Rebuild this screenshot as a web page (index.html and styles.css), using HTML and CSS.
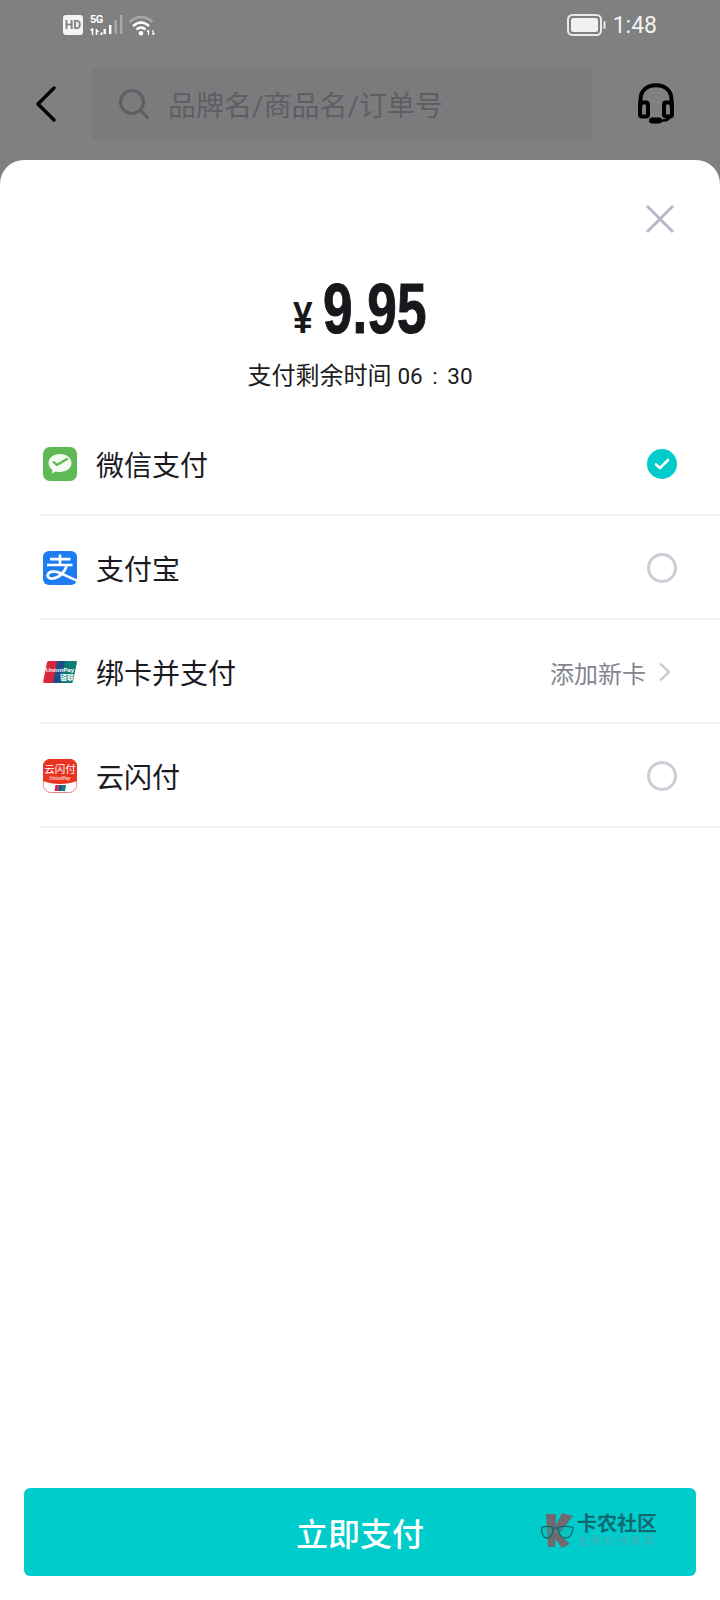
FILE: index.html
```html
<!DOCTYPE html>
<html lang="zh-CN">
<head>
<meta charset="utf-8">
<title>支付</title>
<link rel="stylesheet" href="styles.css">
</head>
<body>
<div class="screen">
  <div class="status">
    <div class="status-left">
      <span class="hd">HD</span>
      <div class="net">
        <span class="net-label">5G</span>
        <svg class="net-arrows" width="13" height="7" viewBox="0 0 13 7"><path d="M2.500 0v7M0.500 2.500L2.500 0.500M6.500 1v6M6.500 2l2 2" stroke="#fff" stroke-width="1.500" fill="none"/><path d="M10.500 4.500h2V7h-2z" fill="#fff"/></svg>
      </div>
      <svg class="signal" width="22" height="22" viewBox="0 0 22 22"><path d="M1.500 15h2.400v5H1.500zM7 11h2.400v9H7z" fill="#fff"/><path d="M12.500 6h2.400v14h-2.400zM18 1h2.400v19H18z" fill="#a9a9a9"/></svg>
      <svg class="wifi" width="28" height="22" viewBox="0 0 28 22"><path d="M1.500 8Q13-2 24.500 8" stroke="#a9a9a9" stroke-width="2.500" fill="none"/><path d="M5 12Q13 5 21 12M8.500 15.500Q13 11.500 17.500 15.500" stroke="#fff" stroke-width="2.400" fill="none"/><circle cx="13" cy="19.300" r="2.300" fill="#fff"/><path d="M20.500 16v5M19 18l1.500-2M25 16v5M25 21l1.500-2" stroke="#fff" stroke-width="1.200" fill="none"/></svg>
    </div>
    <div class="status-right">
      <svg class="battery" width="40" height="22" viewBox="0 0 40 22"><rect x="1" y="1" width="33" height="20" rx="4.500" fill="none" stroke="#eaeaea" stroke-width="2"/><rect x="4" y="4" width="27" height="14" rx="2.500" fill="#f1f1f1"/><rect x="36.500" y="7" width="2" height="8" rx="1" fill="#eaeaea"/></svg>
      <span class="clock">1:48</span>
    </div>
  </div>

  <div class="topbar">
    <svg class="back" width="22" height="36" viewBox="0 0 22 36"><path d="M19 2L3 18l16 16" stroke="#000" stroke-width="3.400" fill="none" stroke-linecap="round" stroke-linejoin="round"/></svg>
    <div class="search">
      <svg class="search-icon" width="32" height="32" viewBox="0 0 32 32"><circle cx="14" cy="14" r="11.500" stroke="#5f5f64" stroke-width="3" fill="none"/><path d="M22.500 22.500L29.500 29.500" stroke="#5f5f64" stroke-width="3" stroke-linecap="round"/></svg>
      <span class="search-text">品牌名/商品名/订单号</span>
    </div>
    <svg class="headset" width="38" height="42" viewBox="0 0 38 42"><path d="M3.500 24V17C3.500 7.500 10 2.200 19 2.200S34.500 7.500 34.500 17v7" stroke="#000" stroke-width="4" fill="none"/><rect x="3" y="19.500" width="8" height="14" rx="2" stroke="#000" stroke-width="4" fill="none"/><rect x="27" y="19.500" width="8" height="14" rx="2" stroke="#000" stroke-width="4" fill="none"/><path d="M33 33c-1 3-3 4.500-6 4.500h-6" stroke="#000" stroke-width="2.600" fill="none"/><rect x="12" y="34.500" width="13" height="6" rx="3" fill="#000"/></svg>
  </div>

  <div class="sheet">
    <div class="sheet-head">
      <svg class="close" width="30" height="30" viewBox="0 0 30 30"><path d="M2 2l26 26M28 2L2 28" stroke="#b7b7c5" stroke-width="3" fill="none"/></svg>
    </div>
    <div class="amount">
      <span class="currency">¥</span><span class="value">9.95</span>
    </div>
    <div class="countdown">支付剩余时间 <span class="countdown-time">06 : 30</span></div>

    <ul class="methods">
      <li class="method">
        <svg class="method-icon" width="34" height="34" viewBox="0 0 34 34"><rect width="34" height="34" rx="7" fill="#5fb954"/><path d="M17 7c-6.500 0-11.500 3.900-11.500 9 0 2.800 1.500 5.200 4 6.900l-.9 3.600 4-2.100c1.400.4 2.900.6 4.400.6 6.500 0 11.500-3.900 11.500-9S23.500 7 17 7z" fill="#f4fbf2"/><path d="M10 14.500l3.800 3.400 11-6.400" stroke="#5fb954" stroke-width="2.300" fill="none" stroke-linejoin="round"/></svg>
        <span class="method-name">微信支付</span>
        <span class="radio radio-on"><svg width="16" height="12" viewBox="0 0 16 12"><path d="M2 6.500l4 3.500 8-8" stroke="#fff" stroke-width="2.600" fill="none" stroke-linecap="round" stroke-linejoin="round"/></svg></span>
      </li>
      <li class="method">
        <svg class="method-icon" width="34" height="34" viewBox="0 0 34 34"><rect width="34" height="34" rx="6" fill="#1c7cf2"/><path d="M17 3.500V13M7 8.200h20.500M4 14h25.500" stroke="#fff" stroke-width="2.700" fill="none"/><path d="M24 14c-2 7-8 13-14.500 13.500C5.500 27.800 4 25.500 5 23.300 6.500 20 12 20 17 22c6 2.400 11 5.400 17 7.500" stroke="#fff" stroke-width="2.700" fill="none"/></svg>
        <span class="method-name">支付宝</span>
        <span class="radio"></span>
      </li>
      <li class="method">
        <svg class="method-icon" width="34" height="22" viewBox="0 0 34 22"><path d="M6 0h12L14 22H1.500C.5 22 0 21.300 .2 20.300L4 1.500C4.300.5 5 0 6 0z" fill="#d7263d"/><path d="M14 0h11l-4 22H10z" fill="#1d4e89"/><path d="M22 0h10.500c1 0 1.700.6 1.400 1.500L30 20.500C29.700 21.500 29 22 28 22H18z" fill="#0a7d74"/><text class="logo-up" x="17" y="11" text-anchor="middle">UnionPay</text><text class="logo-yl" x="24" y="19" text-anchor="middle">银联</text></svg>
        <span class="method-name">绑卡并支付</span>
        <span class="method-extra">添加新卡</span>
        <svg class="method-more" width="13" height="20" viewBox="0 0 13 20"><path d="M2 1.500L11 10l-9 8.500" stroke="#c6c6d0" stroke-width="2.200" fill="none"/></svg>
      </li>
      <li class="method">
        <svg class="method-icon" width="34" height="34" viewBox="0 0 34 34"><rect x=".5" y=".5" width="33" height="33" rx="7" fill="#fff" stroke="#e9867d"/><path d="M7 0h20a7 7 0 0 1 7 7v15c-5 2-11 3-17 3S5 24 0 22V7a7 7 0 0 1 7-7z" fill="#ea3323"/><text class="logo-ysf" x="17" y="13.500" text-anchor="middle">云闪付</text><text class="logo-ysf-en" x="17" y="20.500" text-anchor="middle">UnionPay</text><path d="M12.500 26h3.500l-1 6h-3.500z" fill="#d7263d"/><path d="M16 26h3.500l-1 6H15z" fill="#1d4e89"/><path d="M19.500 26h3.500l-1 6h-3.500z" fill="#0a7d74"/></svg>
        <span class="method-name">云闪付</span>
        <span class="radio"></span>
      </li>
    </ul>

    <button class="pay" type="button">
      立即支付
      <span class="brand">
        <svg class="brand-mark" width="36" height="36" viewBox="0 0 36 36"><path d="M6 1h10l-1 33H8z" fill="#6f6a70"/><path d="M22 0l11 3-13 17-6-4zM16 18l14 13-8 4-10-13z" fill="#6f6a70"/><path d="M1.500 14.500c4-1.500 8-1.500 11.500 0 0 6-2 10.500-6 10.500S1.500 20.500 1.500 14.500zM18 14.500c5-1.500 10-1.500 15 0 0 6-3 10.500-7.500 10.500S18 20.500 18 14.500zM13 15.500c1.500-.7 3.500-.7 5 0" stroke="#0e6a70" stroke-width="1.300" fill="#13b3b3" fill-opacity=".35"/></svg>
        <span class="brand-text">
          <span class="brand-name">卡农社区</span>
          <span class="brand-sub">金融在线教育</span>
        </span>
      </span>
    </button>
  </div>
</div>
</body>
</html>
```
FILE: styles.css
```css
* { box-sizing: border-box; }

html, body { margin: 0; padding: 0; }

body {
  font-family: Roboto, "Noto Sans CJK SC", "Noto Sans", sans-serif;
  background: #fff;
}

.screen {
  width: 720px;
  height: 1600px;
  display: flex;
  flex-direction: column;
  background: #808080;
  overflow: hidden;
}

/* status bar */
.status {
  height: 48px;
  padding: 1px 63px 0;
  display: flex;
  align-items: center;
  justify-content: space-between;
  flex: none;
}

.status-left, .status-right { display: flex; align-items: center; }

.hd {
  width: 20px;
  height: 20px;
  border-radius: 3px;
  background: #f4f4f4;
  color: #808080;
  font-size: 12px;
  font-weight: 700;
  line-height: 20px;
  text-align: center;
}

.net {
  display: flex;
  flex-direction: column;
  width: 12px;
  margin-left: 7px;
}

.net-label {
  color: #fff;
  font-size: 11px;
  font-weight: 700;
  line-height: 12px;
  letter-spacing: -.5px;
}

.net-arrows { margin-top: 2px; }

.signal { margin-left: 0; }

.wifi { margin-left: 4px; }

.battery { margin-right: 6px; }

.clock {
  color: #f2f2f2;
  font-size: 23px;
  line-height: 28px;
  padding-top: 2px;
}

/* header behind the sheet */
.topbar {
  height: 112px;
  flex: none;
  display: flex;
  align-items: center;
  padding-left: 35px;
}

.back { flex: none; }

.search {
  width: 500px;
  height: 72px;
  margin-left: 35px;
  padding-left: 26px;
  display: flex;
  align-items: center;
  background: #7b7b7d;
  border-radius: 4px;
}

.search-text {
  margin-left: 18px;
  color: #5e5e63;
  font-size: 28px;
}

.headset { margin-left: 45px; flex: none; }

/* payment sheet */
.sheet {
  flex: 1;
  display: flex;
  flex-direction: column;
  background: #fff;
  border-radius: 24px 24px 0 0;
}

.sheet-head {
  display: flex;
  justify-content: flex-end;
  padding: 44px 45px 0 0;
}

.close { display: block; }

/* the amount font is narrowed horizontally, so each box holds the narrowed width */
.amount {
  margin-top: 39px;
  height: 72px;
  display: flex;
  justify-content: center;
  align-items: baseline;
  color: #17171c;
  font-family: "Liberation Sans", sans-serif;
  font-weight: 700;
  white-space: nowrap;
}

.currency {
  display: inline-block;
  width: 20px;
  margin-right: 10px;
  font-size: 44px;
  line-height: 72px;
  transform: scaleX(.8);
  transform-origin: left;
}

.value {
  display: inline-block;
  width: 104px;
  font-size: 70px;
  line-height: 72px;
  -webkit-text-stroke: 1px #17171c;
  transform: scaleX(.76);
  transform-origin: left;
}

.countdown {
  margin-top: 15px;
  text-align: center;
  color: #1c1c21;
  font-size: 24px;
  line-height: 32px;
}

.countdown-time {
  font-size: 22.500px;
  word-spacing: 4px;
}

.methods {
  list-style: none;
  margin: 20px 0 0 40px;
  padding: 0;
}

.method {
  height: 104px;
  padding: 2px 43px 0 3px;
  display: flex;
  align-items: center;
  border-bottom: 2px solid #f2f2f4;
  color: #1a1a1f;
}

.method-icon { flex: none; }

.method-name {
  margin-left: 19px;
  font-size: 28px;
  flex: 1;
}

.method-extra {
  color: #85858f;
  font-size: 24px;
}

.method-more { margin: 0 6px 0 12px; }

.radio {
  width: 30px;
  height: 30px;
  flex: none;
  border: 3px solid #cdcdd9;
  border-radius: 50%;
  display: flex;
  align-items: center;
  justify-content: center;
}

.radio-on {
  background: #00cccc;
  border-color: #00cccc;
}

.logo-up {
  fill: #fff;
  font-family: "Liberation Sans", sans-serif;
  font-size: 6.200px;
  font-weight: 700;
}

.logo-yl {
  fill: #fff;
  font-size: 7px;
  font-weight: 700;
}

.logo-ysf {
  fill: #fff;
  font-size: 10.500px;
  font-weight: 400;
}

.logo-ysf-en {
  fill: #ffd9d0;
  font-family: "Liberation Sans", sans-serif;
  font-size: 4.500px;
  font-weight: 700;
}

/* pay button with the community mark laid over it */
.pay {
  position: relative;
  margin: auto 24px 24px;
  height: 88px;
  border: 0;
  border-radius: 6px;
  background: #00cccc;
  color: #fff;
  font-family: inherit;
  font-size: 32px;
  font-weight: 500;
}

.brand {
  position: absolute;
  left: 516px;
  top: 25px;
  display: flex;
  align-items: center;
}

.brand-text {
  display: flex;
  flex-direction: column;
  margin-left: 1px;
  text-align: left;
}

.brand-name {
  color: #0e6a70;
  font-size: 20px;
  font-weight: 700;
  line-height: 21px;
}

.brand-sub {
  color: #3ab2b4;
  font-size: 11px;
  font-weight: 400;
  line-height: 13px;
  letter-spacing: 2.300px;
  white-space: nowrap;
}
```
